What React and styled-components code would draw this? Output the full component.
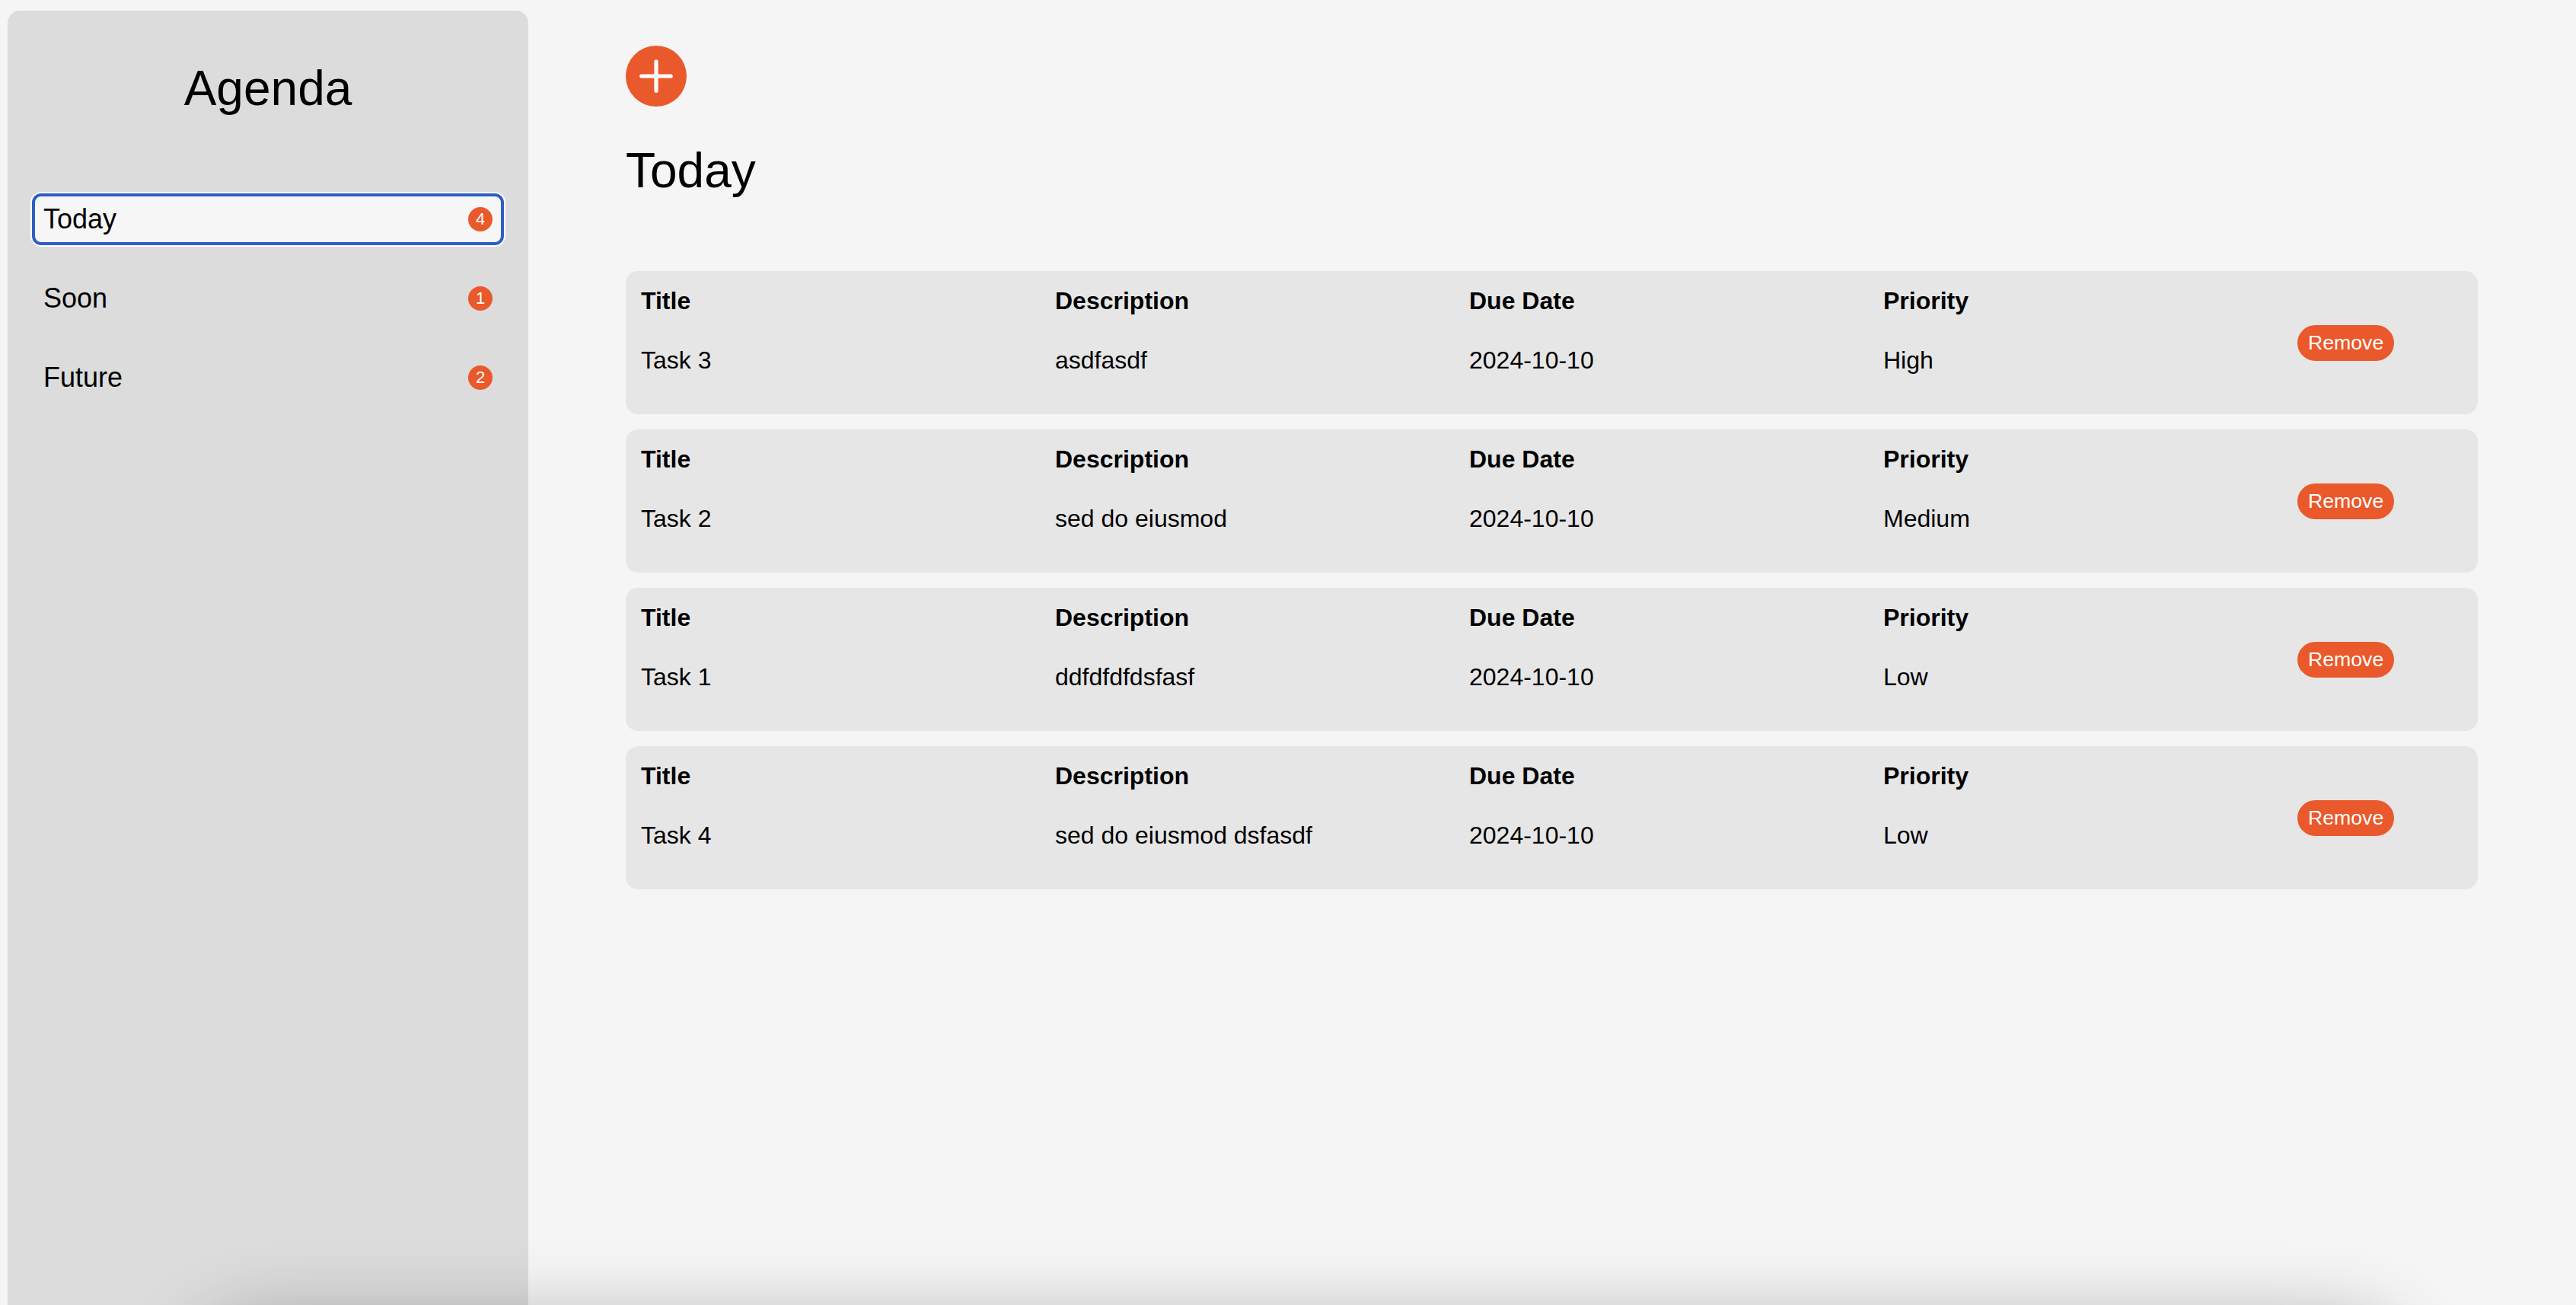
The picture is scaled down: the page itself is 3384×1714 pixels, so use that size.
import React, { useState } from "react";
import styled, { createGlobalStyle } from "styled-components";
import { Plus } from "lucide-react";

const ORANGE = "#ea592b";

const GlobalStyle = createGlobalStyle`
  html, body {
    margin: 0;
    padding: 0;
    background: #f5f5f5;
    font-family: "Liberation Sans", Arial, Helvetica, sans-serif;
    color: #000;
    overflow: hidden;
  }
  * {
    box-sizing: border-box;
  }
`;

const Page = styled.div`
  display: flex;
  min-height: 100vh;
`;

const Sidebar = styled.aside`
  flex-shrink: 0;
  width: 684px;
  height: calc(100vh - 14px);
  margin: 14px 0 0 10px;
  padding: 0 32px;
  background: #dcdcdc;
  border-radius: 16px 16px 0 0;
`;

const SidebarTitle = styled.h1`
  margin: 0 0 101px;
  padding-top: 65px;
  font-size: 64px;
  font-weight: 400;
  line-height: normal;
  text-align: center;
`;

const Nav = styled.nav`
  display: flex;
  flex-direction: column;
  gap: 36px;
`;

const NavItem = styled.button`
  display: flex;
  align-items: center;
  justify-content: space-between;
  width: 100%;
  height: 68px;
  padding: 0 11px;
  border: 4px solid ${(p) => (p.$active ? "#2c5fc4" : "transparent")};
  border-radius: 12px;
  background: ${(p) => (p.$active ? "#f6f6f7" : "transparent")};
  box-shadow: ${(p) => (p.$active ? "0 0 0 2px #fff" : "none")};
  font-family: inherit;
  font-size: 36px;
  color: #000;
  cursor: pointer;
  outline: none;
`;

const Badge = styled.span`
  display: flex;
  align-items: center;
  justify-content: center;
  width: 32px;
  height: 32px;
  border-radius: 50%;
  background: ${ORANGE};
  color: #fff;
  font-size: 22px;
`;

const Main = styled.main`
  flex: 1;
  padding: 60px 129px 0 128px;
`;

const AddButton = styled.button`
  display: flex;
  align-items: center;
  justify-content: center;
  width: 80px;
  height: 80px;
  padding: 0;
  border: none;
  border-radius: 50%;
  background: ${ORANGE};
  color: #fff;
  cursor: pointer;
`;

const Heading = styled.h2`
  margin: 47px 0 95px;
  font-size: 64px;
  font-weight: 400;
  line-height: normal;
`;

const TaskList = styled.div`
  display: flex;
  flex-direction: column;
  gap: 20px;
`;

const TaskCard = styled.div`
  display: grid;
  grid-template-columns: repeat(4, 1fr) 217px;
  align-items: center;
  padding: 0 20px;
  background: #e6e6e6;
  border-radius: 16px;
`;

const Field = styled.div`
  padding: 21px 0 52px;
  font-size: 32px;
  line-height: normal;
`;

const Label = styled.div`
  font-weight: 700;
`;

const Value = styled.div`
  margin-top: 41px;
`;

const RemoveButton = styled.button`
  justify-self: start;
  padding: 8px 14px;
  border: none;
  border-radius: 999px;
  background: ${ORANGE};
  color: #fff;
  font-family: inherit;
  font-size: 26.67px;
  line-height: normal;
  cursor: pointer;
`;

const BottomShade = styled.div`
  position: fixed;
  left: 290px;
  right: 259px;
  top: calc(100vh + 62px);
  height: 400px;
  border-radius: 60px;
  box-shadow: 0 0 100px 40px rgba(0, 0, 0, 0.3);
  pointer-events: none;
`;

const lists = [
  { name: "Today", count: 4 },
  { name: "Soon", count: 1 },
  { name: "Future", count: 2 },
];

const tasks = [
  { title: "Task 3", description: "asdfasdf", due: "2024-10-10", priority: "High" },
  { title: "Task 2", description: "sed do eiusmod", due: "2024-10-10", priority: "Medium" },
  { title: "Task 1", description: "ddfdfdfdsfasf", due: "2024-10-10", priority: "Low" },
  { title: "Task 4", description: "sed do eiusmod dsfasdf", due: "2024-10-10", priority: "Low" },
];

export default function App() {
  const [active, setActive] = useState("Today");
  return (
    <>
      <GlobalStyle />
      <Page>
        <Sidebar>
          <SidebarTitle>Agenda</SidebarTitle>
          <Nav>
            {lists.map((list) => (
              <NavItem
                key={list.name}
                $active={list.name === active}
                onClick={() => setActive(list.name)}
              >
                {list.name}
                <Badge>{list.count}</Badge>
              </NavItem>
            ))}
          </Nav>
        </Sidebar>
        <Main>
          <AddButton aria-label="Add task">
            <Plus size={66} strokeWidth={1.9} />
          </AddButton>
          <Heading>{active}</Heading>
          <TaskList>
            {tasks.map((task) => (
              <TaskCard key={task.title}>
                <Field>
                  <Label>Title</Label>
                  <Value>{task.title}</Value>
                </Field>
                <Field>
                  <Label>Description</Label>
                  <Value>{task.description}</Value>
                </Field>
                <Field>
                  <Label>Due Date</Label>
                  <Value>{task.due}</Value>
                </Field>
                <Field>
                  <Label>Priority</Label>
                  <Value>{task.priority}</Value>
                </Field>
                <RemoveButton>Remove</RemoveButton>
              </TaskCard>
            ))}
          </TaskList>
        </Main>
      </Page>
      <BottomShade />
    </>
  );
}
